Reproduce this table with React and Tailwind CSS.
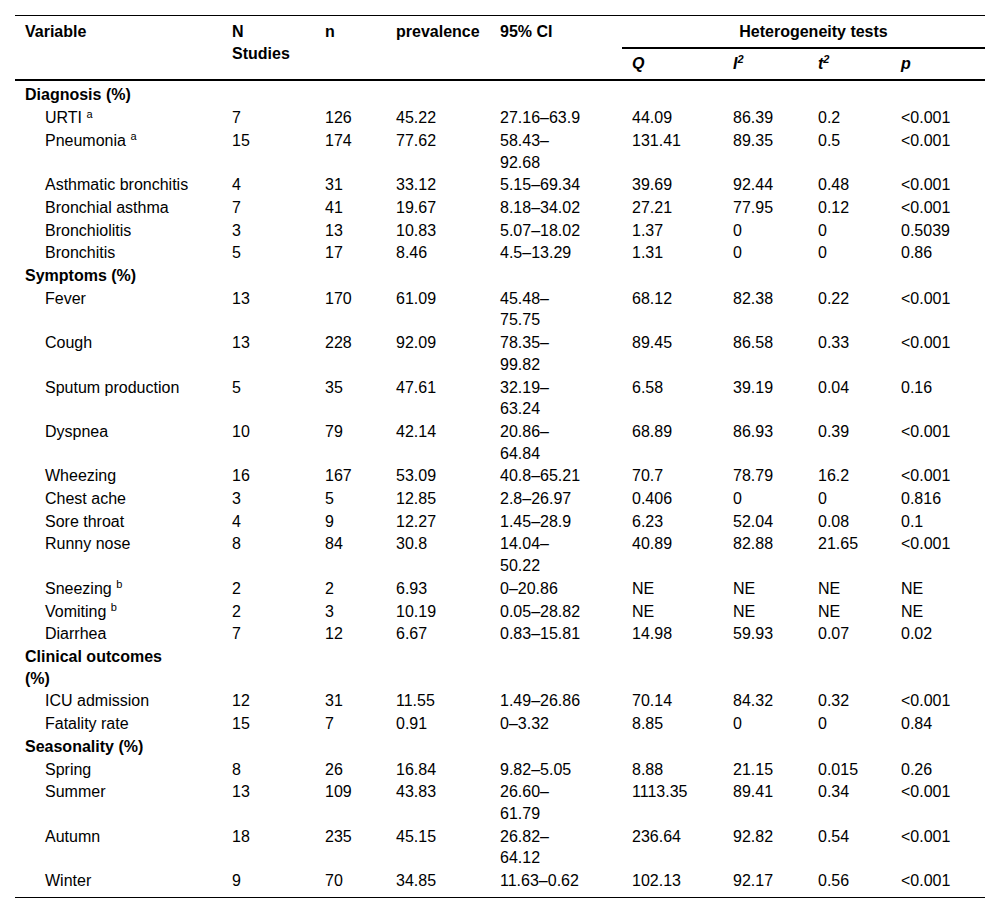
import React from "react";

const sections = [
  {
    title: ["Diagnosis (%)"],
    rows: [
      [["URTI", "a"], "7", "126", "45.22", "27.16–63.9", "44.09", "86.39", "0.2", "<0.001"],
      [["Pneumonia", "a"], "15", "174", "77.62", "58.43–92.68", "131.41", "89.35", "0.5", "<0.001"],
      [["Asthmatic bronchitis"], "4", "31", "33.12", "5.15–69.34", "39.69", "92.44", "0.48", "<0.001"],
      [["Bronchial asthma"], "7", "41", "19.67", "8.18–34.02", "27.21", "77.95", "0.12", "<0.001"],
      [["Bronchiolitis"], "3", "13", "10.83", "5.07–18.02", "1.37", "0", "0", "0.5039"],
      [["Bronchitis"], "5", "17", "8.46", "4.5–13.29", "1.31", "0", "0", "0.86"],
    ],
  },
  {
    title: ["Symptoms (%)"],
    rows: [
      [["Fever"], "13", "170", "61.09", "45.48–75.75", "68.12", "82.38", "0.22", "<0.001"],
      [["Cough"], "13", "228", "92.09", "78.35–99.82", "89.45", "86.58", "0.33", "<0.001"],
      [["Sputum production"], "5", "35", "47.61", "32.19–63.24", "6.58", "39.19", "0.04", "0.16"],
      [["Dyspnea"], "10", "79", "42.14", "20.86–64.84", "68.89", "86.93", "0.39", "<0.001"],
      [["Wheezing"], "16", "167", "53.09", "40.8–65.21", "70.7", "78.79", "16.2", "<0.001"],
      [["Chest ache"], "3", "5", "12.85", "2.8–26.97", "0.406", "0", "0", "0.816"],
      [["Sore throat"], "4", "9", "12.27", "1.45–28.9", "6.23", "52.04", "0.08", "0.1"],
      [["Runny nose"], "8", "84", "30.8", "14.04–50.22", "40.89", "82.88", "21.65", "<0.001"],
      [["Sneezing", "b"], "2", "2", "6.93", "0–20.86", "NE", "NE", "NE", "NE"],
      [["Vomiting", "b"], "2", "3", "10.19", "0.05–28.82", "NE", "NE", "NE", "NE"],
      [["Diarrhea"], "7", "12", "6.67", "0.83–15.81", "14.98", "59.93", "0.07", "0.02"],
    ],
  },
  {
    title: ["Clinical outcomes", "(%)"],
    rows: [
      [["ICU admission"], "12", "31", "11.55", "1.49–26.86", "70.14", "84.32", "0.32", "<0.001"],
      [["Fatality rate"], "15", "7", "0.91", "0–3.32", "8.85", "0", "0", "0.84"],
    ],
  },
  {
    title: ["Seasonality (%)"],
    rows: [
      [["Spring"], "8", "26", "16.84", "9.82–5.05", "8.88", "21.15", "0.015", "0.26"],
      [["Summer"], "13", "109", "43.83", "26.60–61.79", "1113.35", "89.41", "0.34", "<0.001"],
      [["Autumn"], "18", "235", "45.15", "26.82–64.12", "236.64", "92.82", "0.54", "<0.001"],
      [["Winter"], "9", "70", "34.85", "11.63–0.62", "102.13", "92.17", "0.56", "<0.001"],
    ],
  },
];

const base = "pl-[10px] pr-0 py-[0.5px] align-top text-left";

export default function App() {
  const totalRows = sections.reduce((a, s) => a + 1 + s.rows.length, 0);
  let idx = 0;
  return (
    <div className="w-[1000px] min-h-[913px] bg-white pt-[15px] pl-[15px] text-black font-['Liberation_Sans',Arial,sans-serif] text-[16px] leading-[21.7px]">
      <table className="table-fixed w-[970px] border-separate border-spacing-0 border-t border-b border-black">
        <colgroup>
          <col className="w-[207px]" />
          <col className="w-[93px]" />
          <col className="w-[71px]" />
          <col className="w-[104px]" />
          <col className="w-[132px]" />
          <col className="w-[101px]" />
          <col className="w-[85px]" />
          <col className="w-[83px]" />
          <col className="w-[94px]" />
        </colgroup>
        <thead>
          <tr>
            <th rowSpan={2} className="pl-[10px] pt-[5px] align-top text-left font-bold border-b-2 border-black">Variable</th>
            <th rowSpan={2} className="pl-[10px] pt-[5px] align-top text-left font-bold border-b-2 border-black">
              N<br />Studies
            </th>
            <th rowSpan={2} className="pl-[10px] pt-[5px] align-top text-left font-bold border-b-2 border-black">n</th>
            <th rowSpan={2} className="pl-[10px] pt-[5px] align-top text-left font-bold border-b-2 border-black">prevalence</th>
            <th rowSpan={2} className="pl-[10px] pt-[5px] align-top text-left font-bold border-b-2 border-black">95% CI</th>
            <th colSpan={4} className="pl-[20px] pt-[5px] pb-[4px] align-top text-center font-bold border-b-2 border-black">
              Heterogeneity tests
            </th>
          </tr>
          <tr>
            <th className="pl-[10px] pt-[4px] pb-[5px] align-top text-left font-bold italic border-b-2 border-black">Q</th>
            <th className="pl-[10px] pt-[4px] pb-[5px] align-top text-left font-bold italic border-b-2 border-black">
              I<sup className="text-[11px]">2</sup>
            </th>
            <th className="pl-[10px] pt-[4px] pb-[5px] align-top text-left font-bold italic border-b-2 border-black">
              t<sup className="text-[11px]">2</sup>
            </th>
            <th className="pl-[10px] pt-[4px] pb-[5px] align-top text-left font-bold italic border-b-2 border-black">p</th>
          </tr>
        </thead>
        <tbody>
          {sections.map((s) => {
            const out = [];
            const first = idx === 0;
            idx++;
            out.push(
              <tr key={s.title[0]}>
                <td className={`${base} font-bold ${first ? "pt-[3px]" : ""}`}>
                  {s.title.map((t, i) => (
                    <React.Fragment key={i}>
                      {i > 0 && <br />}
                      {t}
                    </React.Fragment>
                  ))}
                </td>
                <td colSpan={8} className={base}></td>
              </tr>
            );
            s.rows.forEach((r) => {
              idx++;
              const last = idx === totalRows;
              const pb = last ? "pb-[5px]" : "";
              out.push(
                <tr key={r[0][0]}>
                  <td className={`pl-[30px] pr-0 py-[0.5px] align-top text-left font-normal ${pb}`}>
                    {r[0][0]}
                    {r[0][1] && (
                      <>
                        {" "}
                        <sup className="text-[11px]">{r[0][1]}</sup>
                      </>
                    )}
                  </td>
                  {r.slice(1).map((c, i) => (
                    <td key={i} className={`${base} font-normal ${pb}`}>
                      {i === 3 ? <div className="max-w-[84px]">{c}</div> : c}
                    </td>
                  ))}
                </tr>
              );
            });
            return out;
          })}
        </tbody>
      </table>
    </div>
  );
}
